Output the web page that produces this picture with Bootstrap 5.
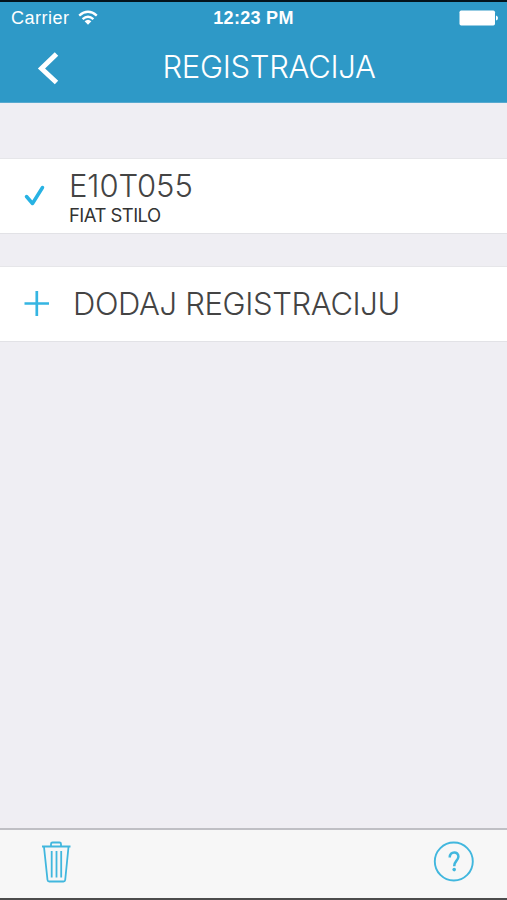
<!DOCTYPE html>
<html lang="hr">
<head>
<meta charset="utf-8">
<meta name="viewport" content="width=device-width, initial-scale=1">
<title>Registracija</title>
<link href="https://cdn.jsdelivr.net/npm/bootstrap@5.3.0/dist/css/bootstrap.min.css" rel="stylesheet">
<style>
body{background:#efeef3;font-family:Inter,"Liberation Sans",sans-serif;color:#444;height:900px}
.top-area{background:#2e99c7;height:103px;border-top:2px solid #04131b;border-bottom:1px solid #57a9cf}
.status{height:32px;padding:0 9px 0 11px;font:18px/32px "Liberation Sans",Arial,sans-serif}
.status>*{flex:1 1 0}
.carrier{letter-spacing:.5px}
.clock{font-weight:700;font-size:18px;letter-spacing:.3px;margin-left:-2px}
.titlebar{height:66px}
.side{width:97px}
.thin{font-weight:300;font-size:31px;line-height:36px;white-space:nowrap}
.heading{letter-spacing:-.3px;padding-left:31px}
.plate{letter-spacing:-.1px}
.vehicle{padding-top:2px}
.model{font-size:18.5px;line-height:22px;letter-spacing:-.55px;font-weight:400;color:#333}
.add{letter-spacing:-.37px}
.entry{height:76px;border-top:1px solid #e6e6e9;border-bottom:1px solid #e2e2e6}
.entry-icon{width:69px;padding-left:24px}
.tools{height:72px;background:#f7f7f7;border-top:2px solid #bfbfc4;border-bottom:2px solid #4c4c4c}
svg{display:block}
</style>
</head>
<body class="d-flex flex-column overflow-hidden">
<header class="top-area text-white flex-shrink-0">
  <div class="status d-flex align-items-center">
    <div class="d-flex align-items-center"><span class="carrier">Carrier</span>
      <svg class="ms-2" width="20" height="16" viewBox="0 0 20 16" fill="none" stroke="#fff" stroke-width="2.4"><path d="M1.2 5.6Q10-2 18.800 5.600M4.600 9.200Q10 4.400 15.400 9.200"/><path d="M6.600 11.200Q10 8.200 13.400 11.200L10 14.800Z" fill="#fff" stroke="none"/></svg>
    </div>
    <div class="clock text-center text-nowrap">12:23 PM</div>
    <div class="d-flex justify-content-end"><svg width="39" height="16" viewBox="0 0 39 16" fill="#fff"><rect width="35.5" height="15" x=".5" y=".5" rx="1.7"/><path d="M37 5.500q2 .5 2 2.500t-2 2.500z"/></svg></div>
  </div>
  <div class="titlebar d-flex align-items-center">
    <div class="side"><svg width="97" height="68" fill="none" stroke="#fff" stroke-width="5"><path d="M56.500 21L41.500 35.500L56.500 49.500"/></svg></div>
    <h1 class="thin heading flex-fill text-center m-0">REGISTRACIJA</h1>
    <div class="side"></div>
  </div>
</header>
<main class="flex-fill">
  <div class="entry bg-white d-flex align-items-center" style="margin-top:55px">
    <div class="entry-icon"><svg width="22" height="22" viewBox="0 0 22 22" fill="none" stroke="#27b2e3" stroke-width="3.5"><path d="M2.500 11.500L8.500 18.500L18.500 2.500" stroke-linecap="round" stroke-linejoin="round"/></svg></div>
    <div class="vehicle"><div class="thin plate">E10T055</div><div class="model">FIAT STILO</div></div>
  </div>
  <div class="entry bg-white d-flex align-items-center" style="margin-top:32px">
    <div class="entry-icon"><svg width="25" height="26" viewBox="0 0 25 26" fill="none" stroke="#35b5e2" stroke-width="2.7"><path d="M.5 12.500H25M12.800 0V25"/></svg></div>
    <div class="thin add ps-1">DODAJ REGISTRACIJU</div>
  </div>
</main>
<footer class="tools d-flex justify-content-between align-items-center flex-shrink-0">
  <svg width="96" height="68" fill="none" stroke="#41b7de" stroke-width="1.8"><path d="M42 16.500H70.500M44 17L47.500 50Q47.700 51.500 49.200 51.500H63.500Q65 51.500 65.200 50L68.500 17M51 16V14Q51 12.500 52.500 12.500H59.500Q61 12.500 61 14V16"/><path d="M51.700 21V47.500M56.500 21V47.500M61.200 21V47.500"/></svg>
  <svg width="96" height="68" fill="none" stroke="#41b7de" stroke-width="1.9"><circle cx="42.800" cy="31.500" r="19"/><path d="M38.700 27.500C38.700 20.700 47.700 20.900 47.400 26.800C47.200 30.600 43.200 31 43.200 36.200" stroke-width="2.500"/><circle cx="43.200" cy="39.600" r="1.800" fill="#41b7de" stroke="none"/></svg>
</footer>
<script src="https://cdn.jsdelivr.net/npm/bootstrap@5.3.0/dist/js/bootstrap.bundle.min.js"></script>
</body>
</html>
